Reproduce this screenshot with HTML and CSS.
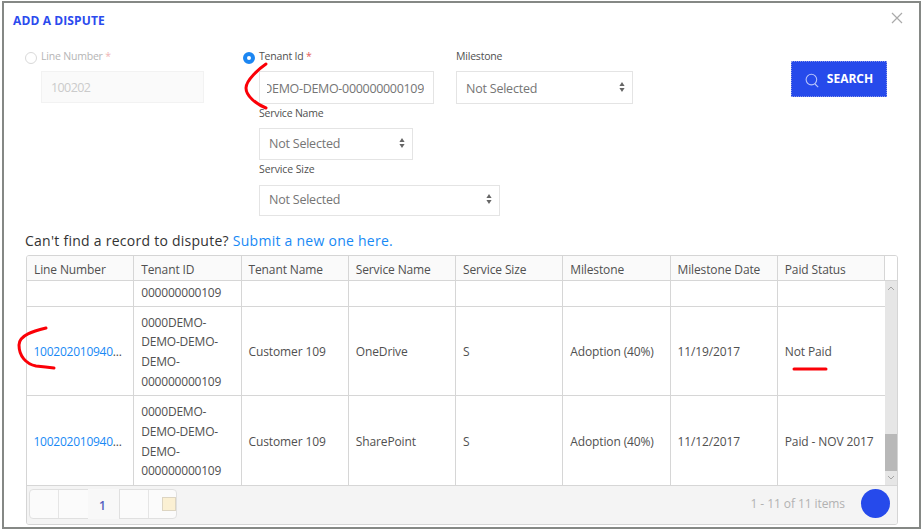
FILE: index.html
```html
<!DOCTYPE html>
<html lang="en">
<head>
<meta charset="utf-8">
<title>Add a dispute</title>
<link rel="stylesheet" href="styles.css">
</head>
<body>
<main class="dialog">
  <header class="head">
    <h1>ADD A DISPUTE</h1>
    <svg class="close" viewBox="0 0 12 12"><path d="M1 1l10 10M11 1L1 11"/></svg>
  </header>
  <section class="form">
    <div class="field line disabled">
      <label><i class="radio"></i><span>Line Number <b>*</b></span></label>
      <div class="input">100202</div>
    </div>
    <div class="middle">
      <div class="pair">
        <div class="field tenant">
          <label><i class="radio on"></i><span>Tenant Id <b>*</b></span></label>
          <div class="input"><div class="clip"><span>DEMO-DEMO-000000000109</span></div></div>
        </div>
        <div class="field milestone">
          <label><span>Milestone</span></label>
          <div class="input select">Not Selected<svg viewBox="0 0 6 10"><path d="M3 0l2.6 4H.4zM3 10L.4 6h5.2z"/></svg></div>
        </div>
      </div>
      <div class="field name">
        <label><span>Service Name</span></label>
        <div class="input select">Not Selected<svg viewBox="0 0 6 10"><path d="M3 0l2.6 4H.4zM3 10L.4 6h5.2z"/></svg></div>
      </div>
      <div class="field size">
        <label><span>Service Size</span></label>
        <div class="input select">Not Selected<svg viewBox="0 0 6 10"><path d="M3 0l2.6 4H.4zM3 10L.4 6h5.2z"/></svg></div>
      </div>
    </div>
    <button class="search"><svg viewBox="0 0 14 15"><circle cx="6.4" cy="6.6" r="5.3"/><path d="M10 11l3.2 3.2"/></svg><span>SEARCH</span></button>
  </section>
  <p class="prompt"><span>Can't find a record to dispute?</span> <a>Submit a new one here.</a></p>
  <section class="table">
    <div class="row header"><div>Line Number</div><div>Tenant ID</div><div>Tenant Name</div><div>Service Name</div><div>Service Size</div><div>Milestone</div><div>Milestone Date</div><div>Paid Status</div></div>
    <div class="body">
      <div class="rows">
        <div class="row partial"><div></div><div><span class="num">000000000109</span></div><div></div><div></div><div></div><div></div><div></div><div></div></div>
        <div class="row"><div><span class="id"><a>100202010940</a>...</span></div><div><span class="num">0000DEMO-<br>DEMO-DEMO-<br>DEMO-<br>000000000109</span></div><div>Customer 109</div><div>OneDrive</div><div>S</div><div>Adoption (40%)</div><div>11/19/2017</div><div>Not Paid</div></div>
        <div class="row"><div><span class="id"><a>100202010940</a>...</span></div><div><span class="num">0000DEMO-<br>DEMO-DEMO-<br>DEMO-<br>000000000109</span></div><div>Customer 109</div><div>SharePoint</div><div>S</div><div>Adoption (40%)</div><div>11/12/2017</div><div>Paid - NOV 2017</div></div>
      </div>
      <div class="scroll">
        <svg viewBox="0 0 8 5"><path d="M1 4l3-3 3 3"/></svg>
        <div class="thumb"></div>
        <svg viewBox="0 0 8 5"><path d="M1 1l3 3 3-3"/></svg>
      </div>
    </div>
    <footer class="pager">
      <div class="pages"><i></i><i></i><strong>1</strong><i></i><i class="last"></i></div>
      <span class="count">1 - 11 of 11 items</span>
      <span class="dot"></span>
    </footer>
  </section>
  <svg class="marks" viewBox="0 0 922 530">
    <path d="M266 64C260 68 246 80 246 88C246 96 256 104 266 108"/>
    <path d="M46 328C34 331 19 335 19 345C19 356 26 364 36 366Q46 367 54 368"/>
    <path d="M794 369H826"/>
  </svg>
</main>
</body>
</html>
```

FILE: styles.css
```css
* { box-sizing: border-box; }
body { margin: 0; background: #fff; font: 12px/20px "Open Sans", "Noto Sans", sans-serif; color: #505050; }
.dialog { position: relative; width: 919px; height: 528px; margin: 1px 0 0 2px; border: 2px solid #858885; display: flex; flex-direction: column; }
.head { height: 35px; flex: none; display: flex; justify-content: space-between; align-items: center; padding: 0 16px 0 9px; }
h1 { margin: 0; font-size: 12px; font-weight: 700; line-height: 20px; color: #2b4bee; letter-spacing: .12px; }
.close { width: 12px; height: 12px; margin-top: -5px; }
.close path { fill: none; stroke: #aaa; stroke-width: 1.2; }
.form { height: 193px; flex: none; display: flex; align-items: flex-start; padding: 9px 32px 0 37px; }
.field label { display: flex; align-items: center; height: 18px; font-size: 10.5px; line-height: 18px; color: #505050; letter-spacing: -.2px; white-space: nowrap; }
.field label b { color: #e35b5b; font-weight: 400; }
.input { border: 1px solid #e4e4e4; height: 32px; display: flex; align-items: center; padding: 2px 9px 0 9px; font-size: 12.5px; color: #757575; letter-spacing: -.22px; white-space: nowrap; }
.line { width: 163px; }
.line label, .tenant label { margin-left: -16px; }
.radio { width: 12px; height: 12px; border: 1px solid #d9d9d9; border-radius: 50%; margin: 3px 4px 0 0; flex: none; }
.radio.on { border: 4px solid #1c86f2; background: #fff; }
.line label { color: #b5b5b5; letter-spacing: -.2px; }
.line label b { color: #f0b5b5; }
.line .input { margin-top: 6px; background: #fafafa; border-color: #f2f2f2; color: #cbcbcb; letter-spacing: -.6px; }
.middle { margin-left: 55px; width: 374px; }
.pair { display: flex; gap: 22px; }
.tenant { width: 175px; }
.milestone { width: 177px; }
.pair .input { margin-top: 6px; height: 33px; }
.clip { width: 158px; margin-left: -2px; overflow: hidden; display: flex; justify-content: flex-end; letter-spacing: -.32px; }
.select { justify-content: space-between; }
.select svg { width: 6px; height: 10px; margin: -4px -2px 0 0; fill: #666; }
.name .input { width: 154px; height: 32px; margin-top: 6px; padding-top: 0; }
.size .input { width: 241px; height: 31px; margin-top: 7px; padding-top: 0; padding-bottom: 2px; }
.name .select svg, .size .select svg { margin-top: -2px; }
.size label { letter-spacing: -.1px; }
.size { margin-top: -1px; padding-top: 1px; }
.search { margin: 14px 0 0 auto; width: 96px; height: 36px; padding: 0; border: 1px dotted #8998e8; background: #264aeb; color: #fff; font: 700 12px/20px "Open Sans", sans-serif; letter-spacing: 0; display: flex; align-items: center; justify-content: center; gap: 8px; }
.search svg { width: 14px; height: 15px; fill: none; stroke: #b7c3fa; stroke-width: 1.1; margin-top: 3px; }
.prompt { margin: 0; height: 24px; flex: none; padding: 0 0 0 21px; font-size: 14px; line-height: 20px; color: #333; white-space: pre; letter-spacing: .26px; }
a { color: #1889f5; }
.table { width: 872px; height: 270px; margin-left: 22px; border: 1px solid #d5d5d5; border-radius: 3px; display: flex; flex-direction: column; overflow: hidden; }
.row { display: grid; grid-template-columns: repeat(8, 107.25px); height: 89px; width: 858px; border-bottom: 1px solid #d6d6d6; }
.row > div { border-right: 1px solid #d6d6d6; display: flex; align-items: center; padding: 2px 0 0 7px; white-space: nowrap; letter-spacing: -.12px; }
.row.header { height: 25px; flex: none; width: 870px; background: linear-gradient(90deg, #fafafa 858px, #fff 858px); }
.row.header > div { padding-top: 4px; }
.num { line-height: 19.7px; letter-spacing: -.2px; }
.id { letter-spacing: -.25px; margin-left: -.5px; }
.row.partial { height: 26px; }
.row.partial > div { padding-top: 0; padding-bottom: 2px; }
.body { display: flex; height: 204px; flex: none; overflow: hidden; }
.rows { width: 858px; }
.rows .row:last-child { border-bottom: 0; }
.rows .row > div:last-child { border-right: 0; }
.scroll { width: 12px; background: #e6e6e6; display: flex; flex-direction: column; align-items: center; padding: 5px 0; }
.scroll svg { width: 8px; height: 5px; fill: none; stroke: #a5a5a5; flex: none; }
.thumb { width: 12px; height: 37px; margin: auto 0 4px; background: #b8b8b8; }
.pager { flex: 1; background: #f4f4f4; border-top: 1px solid #d6d6d6; display: flex; align-items: center; padding: 0 7px 3px 2px; }
.pages { display: flex; width: 148px; height: 30px; border: 1px solid #e0e0e0; border-radius: 4px; background: #fbfbfb; }
.pages i { width: 29px; border-right: 1px solid #e5e5e5; }
.pages i:nth-child(2) { border: 0; }
.pages strong { width: 32px; margin: -1px 0; padding-right: 2px; background: #f8f8f8; border-right: 1px solid #e0e0e0; text-align: center; line-height: 33px; font-weight: 600; color: #555fc0; }
.pages .last { flex: 1; border: 0; display: flex; align-items: center; justify-content: flex-end; }
.pages .last::after { content: ""; width: 12px; height: 12px; background: #fbf0d3; border: 1px solid #ddd5c2; }
.count { margin-left: auto; color: #b2b2b2; letter-spacing: -.08px; }
.dot { width: 29px; height: 29px; border-radius: 50%; background: #264aeb; margin-left: 16px; }
.marks { position: absolute; left: -4px; top: -3px; width: 922px; height: 530px; fill: none; stroke: #fb0007; stroke-width: 3; stroke-linecap: round; pointer-events: none; }
```
